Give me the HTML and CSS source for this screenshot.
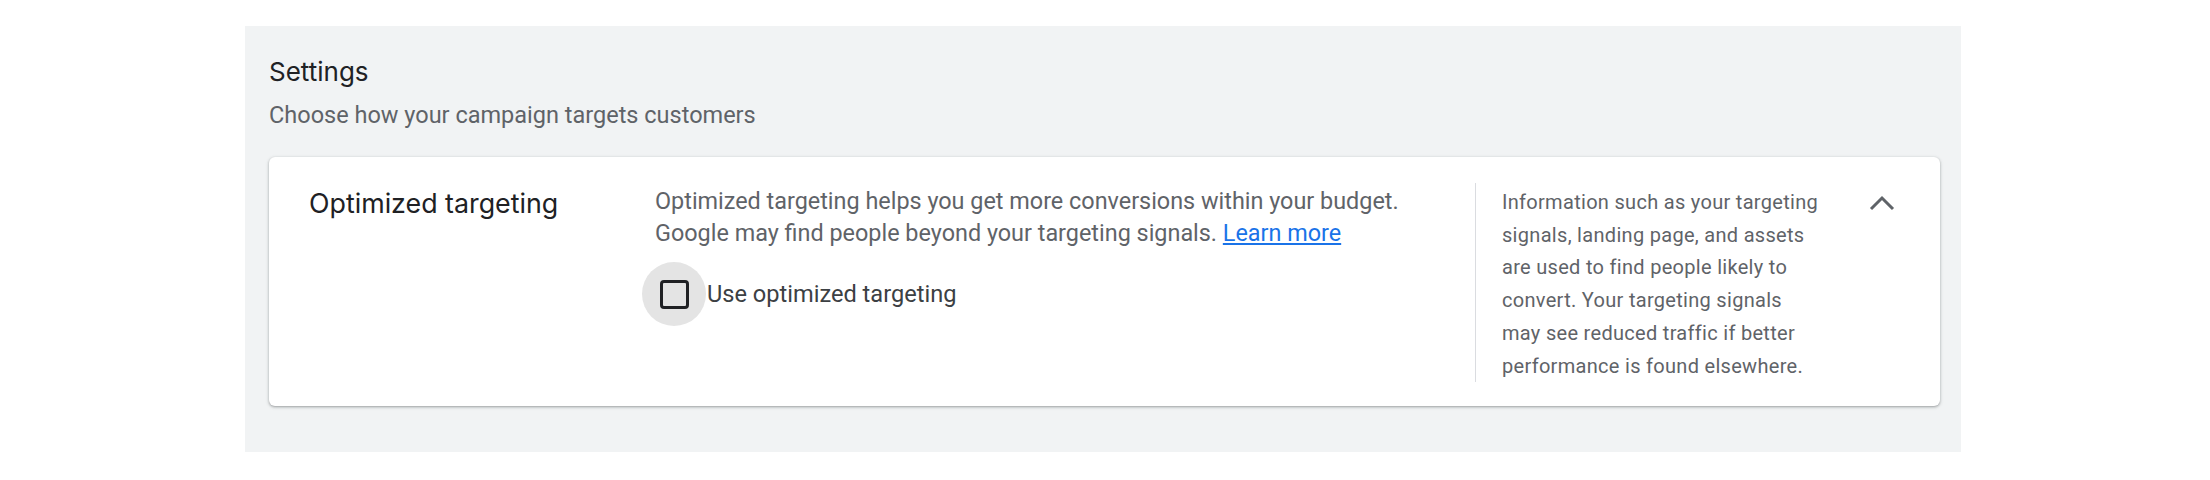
FILE: index.html
```html
<!DOCTYPE html>
<html>
	<head>
		<meta charset="utf-8">
		<title>Settings</title>
		<link rel="stylesheet" href="styles.css">
	</head>
	<body>
		<!-- 设置面板 -->
		<div class="panel">
			<h2 class="panel-title">Settings</h2>
			<p class="panel-sub">Choose how your campaign targets customers</p>

			<!-- 卡片 -->
			<div class="card">
				<div class="card-title">Optimized targeting</div>

				<div class="card-main">
					<p class="desc">
						Optimized targeting helps you get more conversions within your budget.
						Google may find people beyond your targeting signals. <a href="javascript:;">Learn more</a>
					</p>
					<label class="check">
						<span class="check-ripple"><span class="check-box"></span></span>
						<span class="check-label">Use optimized targeting</span>
					</label>
				</div>

				<div class="card-info">
					Information such as your targeting signals, landing page, and assets are used to find people likely to convert. Your targeting signals may see reduced traffic if better performance is found elsewhere.
				</div>

				<a class="toggle" href="javascript:;">
					<svg width="26" height="16" viewBox="0 0 26 16">
						<polyline points="2,14 13,3 24,14" fill="none" stroke="#5f6368" stroke-width="3"/>
					</svg>
				</a>
			</div>
		</div>
	</body>
</html>
```

FILE: styles.css
```css
*{
	margin: 0;
	padding: 0;
	box-sizing: border-box;
}

body{
	background-color: #fff;
	font-family: Roboto, "Liberation Sans", sans-serif;
}

/* 灰色面板 */
.panel{
	width: 1716px;
	margin: 26px 0 0 245px;
	padding: 30px 21px 46px 24px;
	background-color: #f1f3f4;
}

.panel-title{
	font-family: Inter, Roboto, sans-serif;
	font-size: 26px;
	font-weight: 400;
	line-height: 32px;
	color: #202124;
}

.panel-sub{
	margin-top: 11px;
	font-size: 23.5px;
	line-height: 32px;
	color: #5f6368;
}

/* 卡片 */
.card{
	display: flex;
	margin-top: 26px;
	padding: 26px 25px 24px 40px;
	background-color: #fff;
	border-radius: 6px;
	box-shadow: 0 1px 2px 0 rgba(60, 64, 67, .3), 0 1px 3px 1px rgba(60, 64, 67, .15);
}

.card-title{
	flex: none;
	width: 346px;
	padding-top: 4px;
	font-family: Inter, Roboto, sans-serif;
	font-size: 26.8px;
	line-height: 32px;
	color: #202124;
}

.card-main{
	flex: 1;
	padding: 2px 39px 0 0;
}

.desc{
	width: 780px;
	font-size: 23.4px;
	line-height: 32px;
	color: #5f6368;
}

.desc a{
	color: #1a73e8;
	text-decoration: underline;
}

/* 复选框 */
.check{
	display: flex;
	align-items: center;
	margin: 13px 0 0 -13px;
}

.check-ripple{
	display: flex;
	align-items: center;
	justify-content: center;
	width: 64px;
	height: 64px;
	border-radius: 50%;
	background-color: #e4e4e4;
}

.check-box{
	width: 29px;
	height: 29px;
	border: 3px solid #202124;
	border-radius: 4px;
}

.check-label{
	margin-left: 1px;
	font-size: 23.6px;
	line-height: 32px;
	color: #3c4043;
}

/* 右侧说明 */
.card-info{
	flex: none;
	width: 347px;
	padding: 3px 0 0 26px;
	border-left: 1px solid #dadce0;
	font-size: 20px;
	line-height: 32.7px;
	letter-spacing: .3px;
	color: #5f6368;
}

.toggle{
	flex: none;
	display: flex;
	align-items: center;
	justify-content: center;
	width: 67px;
	height: 36px;
	margin: 2px 0 0 26px;
}
```
